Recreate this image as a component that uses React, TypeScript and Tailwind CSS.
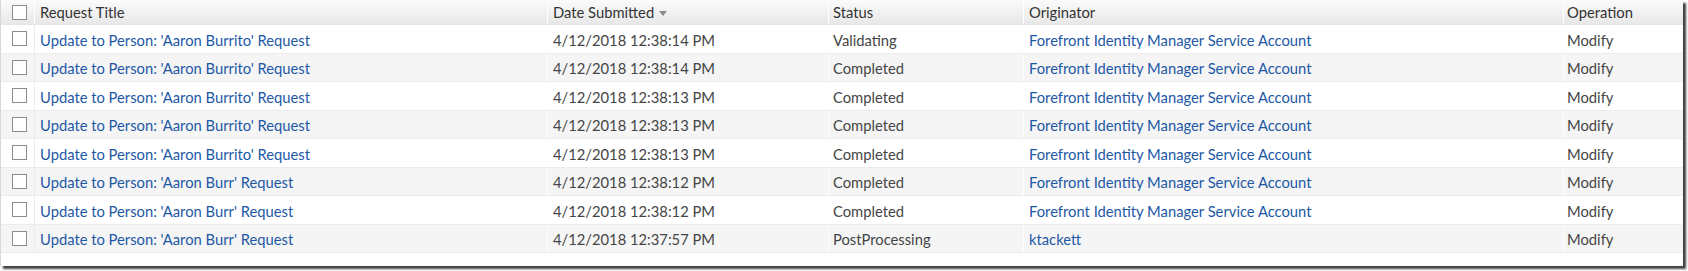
import React from 'react';

type Row = {
  title: string;
  date: string;
  status: string;
  originator: string;
  operation: string;
};

const FIM = 'Forefront Identity Manager Service Account';

const rows: Row[] = [
  { title: "Update to Person: 'Aaron Burrito' Request", date: '4/12/2018 12:38:14 PM', status: 'Validating', originator: FIM, operation: 'Modify' },
  { title: "Update to Person: 'Aaron Burrito' Request", date: '4/12/2018 12:38:14 PM', status: 'Completed', originator: FIM, operation: 'Modify' },
  { title: "Update to Person: 'Aaron Burrito' Request", date: '4/12/2018 12:38:13 PM', status: 'Completed', originator: FIM, operation: 'Modify' },
  { title: "Update to Person: 'Aaron Burrito' Request", date: '4/12/2018 12:38:13 PM', status: 'Completed', originator: FIM, operation: 'Modify' },
  { title: "Update to Person: 'Aaron Burrito' Request", date: '4/12/2018 12:38:13 PM', status: 'Completed', originator: FIM, operation: 'Modify' },
  { title: "Update to Person: 'Aaron Burr' Request", date: '4/12/2018 12:38:12 PM', status: 'Completed', originator: FIM, operation: 'Modify' },
  { title: "Update to Person: 'Aaron Burr' Request", date: '4/12/2018 12:38:12 PM', status: 'Completed', originator: FIM, operation: 'Modify' },
  { title: "Update to Person: 'Aaron Burr' Request", date: '4/12/2018 12:37:57 PM', status: 'PostProcessing', originator: 'ktackett', operation: 'Modify' },
];

// checkbox | title | date | status | originator | operation
const cols = 'grid grid-cols-[34px_513px_281px_195px_540px_1fr]';

const Box = () => (
  <span className="block w-[15px] h-[15px] border border-[#8c8c8c] bg-white" />
);

export default function App() {
  return (
    <div className="w-[1688px] h-[271px] bg-white">
      <div className="w-[1683px] h-[266px] bg-white border-l border-[#d8d8d8] shadow-[3px_3px_2px_rgba(0,0,0,0.75)] text-[14.75px] font-['Lato','Noto_Sans',sans-serif]">
        {/* header */}
        <div className={`${cols} h-[25px] bg-gradient-to-b from-[#fbfbfb] to-[#e8e8e8] border-b border-[#e4e4e4] text-[#333]`}>
          <div className="flex items-center pl-[11px] border-r border-white">
            <Box />
          </div>
          <div className="flex items-center pl-[5px] pt-[1px] border-r border-white">Request Title</div>
          <div className="flex items-center pl-[5px] pt-[1px] border-r border-white">
            Date Submitted
            <svg width="8" height="5" viewBox="0 0 8 5" className="ml-[5px] mt-[1px]">
              <path d="M0 0 L8 0 L4 5 Z" fill="#8a8a8a" />
            </svg>
          </div>
          <div className="flex items-center pl-[4px] pt-[1px] border-r border-white">Status</div>
          <div className="flex items-center pl-[5px] pt-[1px] border-r border-white">Originator</div>
          <div className="flex items-center pl-[3px] pt-[1px]">Operation</div>
        </div>

        {/* rows */}
        {rows.map((r, i) => (
          <div
            key={i}
            className={`${cols} h-[28.5px] border-b border-[#ececec] ${i % 2 === 1 ? 'bg-[#f5f5f5]' : 'bg-white'}`}
          >
            <div className="flex items-center pl-[11px] border-r border-[#ececec]">
              <Box />
            </div>
            <div className="flex items-center pl-[5px] pt-[2px] border-r border-white text-[#1d58a5]">{r.title}</div>
            <div className="flex items-center pl-[5px] pt-[2px] border-r border-white text-[#454545]">{r.date}</div>
            <div className="flex items-center pl-[4px] pt-[2px] border-r border-white text-[#454545]">{r.status}</div>
            <div className="flex items-center pl-[5px] pt-[2px] border-r border-white text-[#1d58a5]">{r.originator}</div>
            <div className="flex items-center pl-[3px] pt-[2px] text-[#454545]">{r.operation}</div>
          </div>
        ))}
      </div>
    </div>
  );
}
